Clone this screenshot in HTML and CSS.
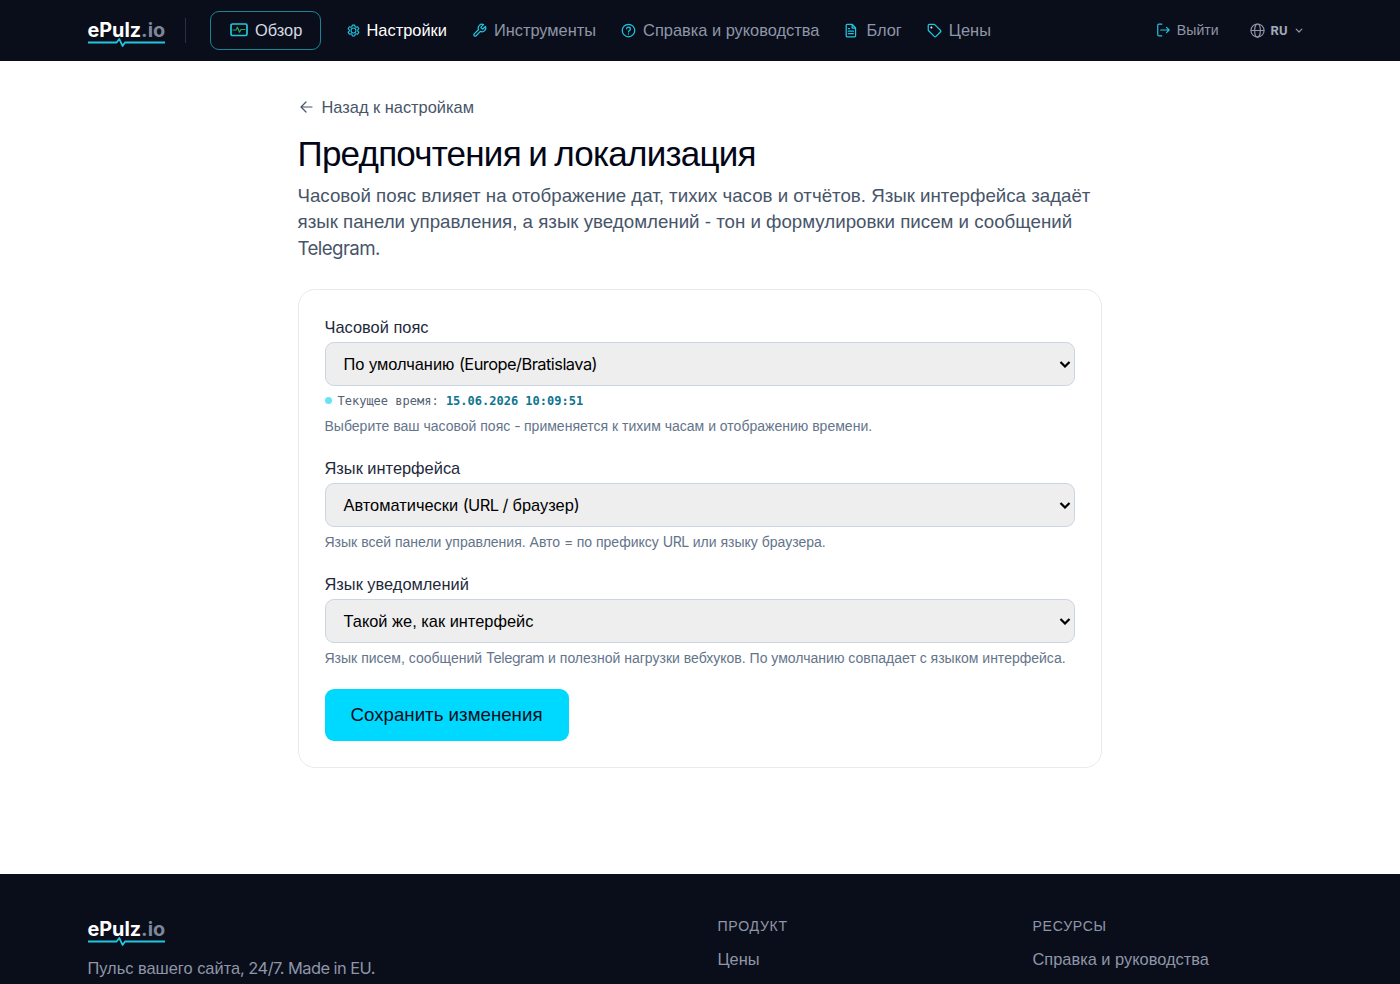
FILE: index.html
```html
<!DOCTYPE html>
<html lang="ru">
<head>
    <meta charset="UTF-8">
    <meta name="viewport" content="width=device-width, initial-scale=1.0">
    <title>Предпочтения и локализация - ePulz.io</title>
    <link rel="stylesheet" href="styles.css">
</head>
<body>

<header class="site-header">
    <div class="container header-row">
        <a class="logo" href="#">
            <span class="logo-text">ePulz<span class="logo-tld">.io</span></span>
            <svg class="logo-pulse" viewBox="0 0 78 10"><path d="M0 4.5h28.8L31.5 1l3.3 7 2.4-3.500H78"/></svg>
        </a>
        <span class="divider"></span>
        <nav class="main-nav">
            <a class="nav-pill" href="#">
                <svg class="icon icon-monitor" viewBox="0 0 18 14"><rect x="1" y="1" width="16" height="11.5" rx="1.6"/><path class="pulse" d="M3 7h3l1.5-2.8 2 5L11 6.5h4"/></svg>
                <span>Обзор</span>
            </a>
            <a class="nav-link active" href="#">
                <svg class="icon icon-gear" viewBox="0 0 24 24"><circle cx="12" cy="12" r="4.5"/><path d="M9.8 2h4.4l.7 3 1.9 1.1 2.9-.9 2.2 3.8-2.2 2v2l2.2 2-2.2 3.8-2.9-.9-1.9 1.1-.7 3H9.8l-.7-3-1.9-1.1-2.9.9L2.1 15l2.2-2v-2l-2.2-2 2.2-3.8 2.9.9L9.1 5z"/></svg>
                <span>Настройки</span>
            </a>
            <a class="nav-link" href="#">
                <svg class="icon" viewBox="0 0 24 24"><path d="M14.7 6.3a1 1 0 0 0 0 1.4l1.6 1.6a1 1 0 0 0 1.4 0l3.77-3.77a6 6 0 0 1-7.94 7.94l-6.91 6.91a2.12 2.12 0 0 1-3-3l6.91-6.91a6 6 0 0 1 7.94-7.94l-3.76 3.76z"/></svg>
                <span>Инструменты</span>
            </a>
            <a class="nav-link" href="#">
                <svg class="icon" viewBox="0 0 24 24"><circle cx="12" cy="12" r="10"/><path d="M9 9.3a3 3 0 0 1 6 .5c0 2-3 2.4-3 4.4M12 17.5v.2"/></svg>
                <span>Справка и руководства</span>
            </a>
            <a class="nav-link" href="#">
                <svg class="icon" viewBox="0 0 24 24"><path d="M13 2H5a1.5 1.5 0 0 0-1.5 1.5v17A1.5 1.5 0 0 0 5 22h12a1.5 1.5 0 0 0 1.5-1.5V8zM13 2v6h5.5M7 9h2M7 13h8M7 17h8"/></svg>
                <span>Блог</span>
            </a>
            <a class="nav-link" href="#">
                <svg class="icon" viewBox="0 0 24 24"><path d="M2 3.5A1.5 1.5 0 0 1 3.5 2H11a2 2 0 0 1 1.4.6l9 9a2 2 0 0 1 0 2.8l-7 7a2 2 0 0 1-2.8 0l-9-9A2 2 0 0 1 2 11z"/><circle class="dot" cx="7" cy="7" r=".6"/></svg>
                <span>Цены</span>
            </a>
        </nav>
        <div class="header-side">
            <a class="logout" href="#">
                <svg class="icon" viewBox="0 0 24 24"><path d="M10 2H5a2 2 0 0 0-2 2v16a2 2 0 0 0 2 2h5M8 12h14M18 7.5l4.500 4.500-4.500 4.500"/></svg>
                <span>Выйти</span>
            </a>
            <button class="lang" type="button">
                <svg class="icon globe" viewBox="0 0 24 24"><circle cx="12" cy="12" r="10.5"/><ellipse cx="12" cy="12" rx="4.5" ry="10.5"/><path d="M2 12h20"/></svg>
                <span>RU</span>
                <svg class="icon chevron" viewBox="0 0 8 8"><path d="M1.200 3.200L4 6l2.800-2.800"/></svg>
            </button>
        </div>
    </div>
</header>

<main class="page">
    <a class="back" href="#">
        <svg class="icon arrow" viewBox="0 0 16 16"><path d="M14 8H3M8 3L3 8l5 5"/></svg>
        <span>Назад к настройкам</span>
    </a>
    <h1>Предпочтения и локализация</h1>
    <p class="lead">Часовой пояс влияет на отображение дат, тихих часов и отчётов. Язык интерфейса задаёт язык панели управления, а язык уведомлений - тон и формулировки писем и сообщений <span class="lat">Telegram.</span></p>

    <form class="card">
        <div class="field">
            <label for="timezone">Часовой пояс</label>
            <div class="select" id="timezone" tabindex="0">
                <span>По умолчанию <span class="lat">(Europe/Bratislava)</span></span>
                <svg class="caret" viewBox="0 0 12 8"><path d="M1.5 2L6 6.5 10.5 2"/></svg>
            </div>
            <p class="clock"><span class="clock-dot"></span>Текущее время: <b>15.06.2026 10:09:51</b></p>
            <p class="hint">Выберите ваш часовой пояс <span class="lat">-</span> применяется к тихим часам и отображению времени.</p>
        </div>
        <div class="field">
            <label for="ui-lang">Язык интерфейса</label>
            <div class="select" id="ui-lang" tabindex="0">
                <span>Автоматически <span class="lat">(URL /</span> браузер<span class="lat">)</span></span>
                <svg class="caret" viewBox="0 0 12 8"><path d="M1.5 2L6 6.5 10.5 2"/></svg>
            </div>
            <p class="hint">Язык всей панели управления. Авто <span class="lat">=</span> по префиксу <span class="lat">URL</span> или языку браузера.</p>
        </div>
        <div class="field">
            <label for="mail-lang">Язык уведомлений</label>
            <div class="select" id="mail-lang" tabindex="0">
                <span>Такой же, как интерфейс</span>
                <svg class="caret" viewBox="0 0 12 8"><path d="M1.5 2L6 6.5 10.5 2"/></svg>
            </div>
            <p class="hint">Язык писем, сообщений <span class="lat">Telegram</span> и полезной нагрузки вебхуков. По умолчанию совпадает с языком интерфейса.</p>
        </div>
        <button class="save" type="button">Сохранить изменения</button>
    </form>
</main>

<footer class="site-footer">
    <div class="container footer-grid">
        <div>
            <a class="logo" href="#">
                <span class="logo-text">ePulz<span class="logo-tld">.io</span></span>
                <svg class="logo-pulse" viewBox="0 0 78 10"><path d="M0 4.5h28.8L31.5 1l3.3 7 2.4-3.500H78"/></svg>
            </a>
            <p class="tagline">Пульс вашего сайта<span class="lat">, 24/7. Made in EU.</span></p>
        </div>
        <div class="footer-col">
            <h2>Продукт</h2>
            <a href="#">Цены</a>
        </div>
        <div class="footer-col">
            <h2>Ресурсы</h2>
            <a href="#">Справка и руководства</a>
        </div>
    </div>
</footer>

</body>
</html>
```
FILE: styles.css
```css
* {
    box-sizing: border-box;
}

body {
    margin: 0;
    height: 984px;
    overflow: hidden;
    display: flex;
    flex-direction: column;
    background: #fff;
    color: #020617;
    font-family: "Liberation Sans", Arial, sans-serif;
    line-height: 1.5;
}

a {
    color: inherit;
    text-decoration: none;
}

h1, h2, p {
    margin: 0;
    font-weight: 400;
}

/* Latin runs inside Cyrillic text */
.lat {
    font-family: Inter, sans-serif;
    line-height: 1;
    letter-spacing: -0.032em;
}

.container {
    width: 1225px;
    margin: 0 auto;
}

.icon {
    flex: none;
    width: 15px;
    height: 15px;
    fill: none;
    stroke: #22c5e0;
    stroke-width: 2;
    stroke-linecap: round;
    stroke-linejoin: round;
}

/* Header */
.site-header {
    flex: none;
    height: 61px;
    background: #0a0e1a;
    color: #8f96a8;
}

.header-row {
    height: 61px;
    display: flex;
    align-items: center;
}

.logo {
    display: block;
    width: 77.5px;
    font-family: Inter, sans-serif;
}

.logo-text {
    display: block;
    color: #fff;
    font-size: 19.8px;
    font-weight: 700;
    line-height: 20px;
}

.logo-tld {
    color: #7d869b;
}

.logo-pulse {
    display: block;
    width: 77.5px;
    height: 10px;
    margin-top: -2px;
    fill: none;
    stroke: #22c5e0;
    stroke-width: 1.8;
    stroke-linejoin: round;
}

.header-row .logo {
    margin-top: 7px;
}

.divider {
    width: 1px;
    height: 25px;
    margin: 0 24px 0 20px;
    background: #283044;
}

.main-nav {
    display: flex;
    align-items: center;
    font-size: 16.4px;
}

.nav-pill {
    display: flex;
    align-items: center;
    gap: 7px;
    width: 110.5px;
    height: 39px;
    margin-right: 26px;
    padding-left: 19px;
    border: 1px solid #1a8496;
    border-radius: 9px;
    color: #d5dae3;
}

.nav-link {
    display: flex;
    align-items: center;
    gap: 7px;
    margin-right: 25px;
}

.active {
    color: #fff;
}

.icon-monitor {
    width: 18px;
    height: 14px;
    margin-top: -2px;
    stroke-width: 1.7;
}

.pulse {
    stroke: #22a85e;
    stroke-width: 1.2;
}

.icon-gear {
    width: 13px;
    height: 13px;
}

.dot {
    fill: #fff;
    stroke: #fff;
}

.header-side {
    display: flex;
    align-items: center;
    gap: 31px;
    margin-left: auto;
    padding-right: 10px;
    font-size: 14.1px;
}

.logout {
    display: flex;
    align-items: center;
    gap: 7px;
}

.logout .icon {
    width: 14px;
    height: 14px;
}

.lang {
    display: flex;
    align-items: center;
    gap: 6px;
    padding: 0;
    border: 0;
    background: none;
    color: #a3aab9;
    font: 700 13px Roboto, sans-serif;
}

.globe {
    stroke: #8f96a8;
    stroke-width: 1.8;
}

.chevron {
    width: 8px;
    height: 8px;
    margin-left: 1px;
    stroke: #8f96a8;
    stroke-width: 1.2;
}

/* Page */
.page {
    flex: none;
    width: 805px;
    height: 813px;
    margin: 0 auto;
    padding-top: 33px;
}

.back {
    display: flex;
    align-items: center;
    gap: 8px;
    height: 26px;
    color: #475569;
    font-size: 16.4px;
}

.arrow {
    width: 16px;
    height: 16px;
    stroke: #475569;
    stroke-width: 1.2;
}

h1 {
    margin-top: 12px;
    font-size: 35px;
    line-height: 44px;
    letter-spacing: -0.022em;
    word-spacing: -1.6px;
}

.lead {
    margin-top: 7px;
    color: #475569;
    font-size: 18.72px;
    line-height: 26.3px;
}

.card {
    width: 804px;
    height: 479px;
    margin-top: 27px;
    padding: 26px;
    border: 1px solid #e7ebf0;
    border-radius: 17px;
}

.field {
    margin-bottom: 21px;
}

.field label {
    display: block;
    margin-bottom: 4px;
    color: #1e293b;
    font-size: 16.4px;
    line-height: 22px;
}

.select {
    display: flex;
    align-items: center;
    justify-content: space-between;
    height: 44px;
    padding: 0 3px 0 18px;
    border: 1px solid #cbd5e1;
    border-radius: 9px;
    background: #eee;
    color: #000;
    font-size: 16.4px;
}

.caret {
    width: 12px;
    height: 8px;
    fill: none;
    stroke: #000;
    stroke-width: 2.2;
}

.clock {
    display: flex;
    align-items: center;
    height: 18px;
    margin: 6px 0;
    color: #566173;
    font: 12px "DejaVu Sans Mono", monospace;
    white-space: pre;
}

.clock b {
    color: #0e7490;
}

.clock-dot {
    width: 7px;
    height: 7px;
    margin-right: 6px;
    border-radius: 50%;
    background: #67e3f5;
}

.hint {
    margin-top: 5px;
    color: #64748b;
    font-size: 14.02px;
    line-height: 20px;
    white-space: nowrap;
}

.save {
    width: 244px;
    height: 52px;
    border: 0;
    border-radius: 9px;
    background: #00d9ff;
    color: #0a0e1a;
    font: 18.7px "Liberation Sans", Arial, sans-serif;
}

/* Footer */
.site-footer {
    flex: 1;
    padding-top: 45px;
    background: #0a0e1a;
    color: #8f96a8;
    font-size: 16.4px;
}

.footer-grid {
    display: grid;
    grid-template-columns: 630px 315px 280px;
}

.tagline {
    margin-top: 9px;
}

.footer-col h2 {
    margin-top: -2px;
    font-size: 14.1px;
    line-height: 18px;
    letter-spacing: 0.05em;
    text-transform: uppercase;
}

.footer-col a {
    display: block;
    margin-top: 12px;
}
```
